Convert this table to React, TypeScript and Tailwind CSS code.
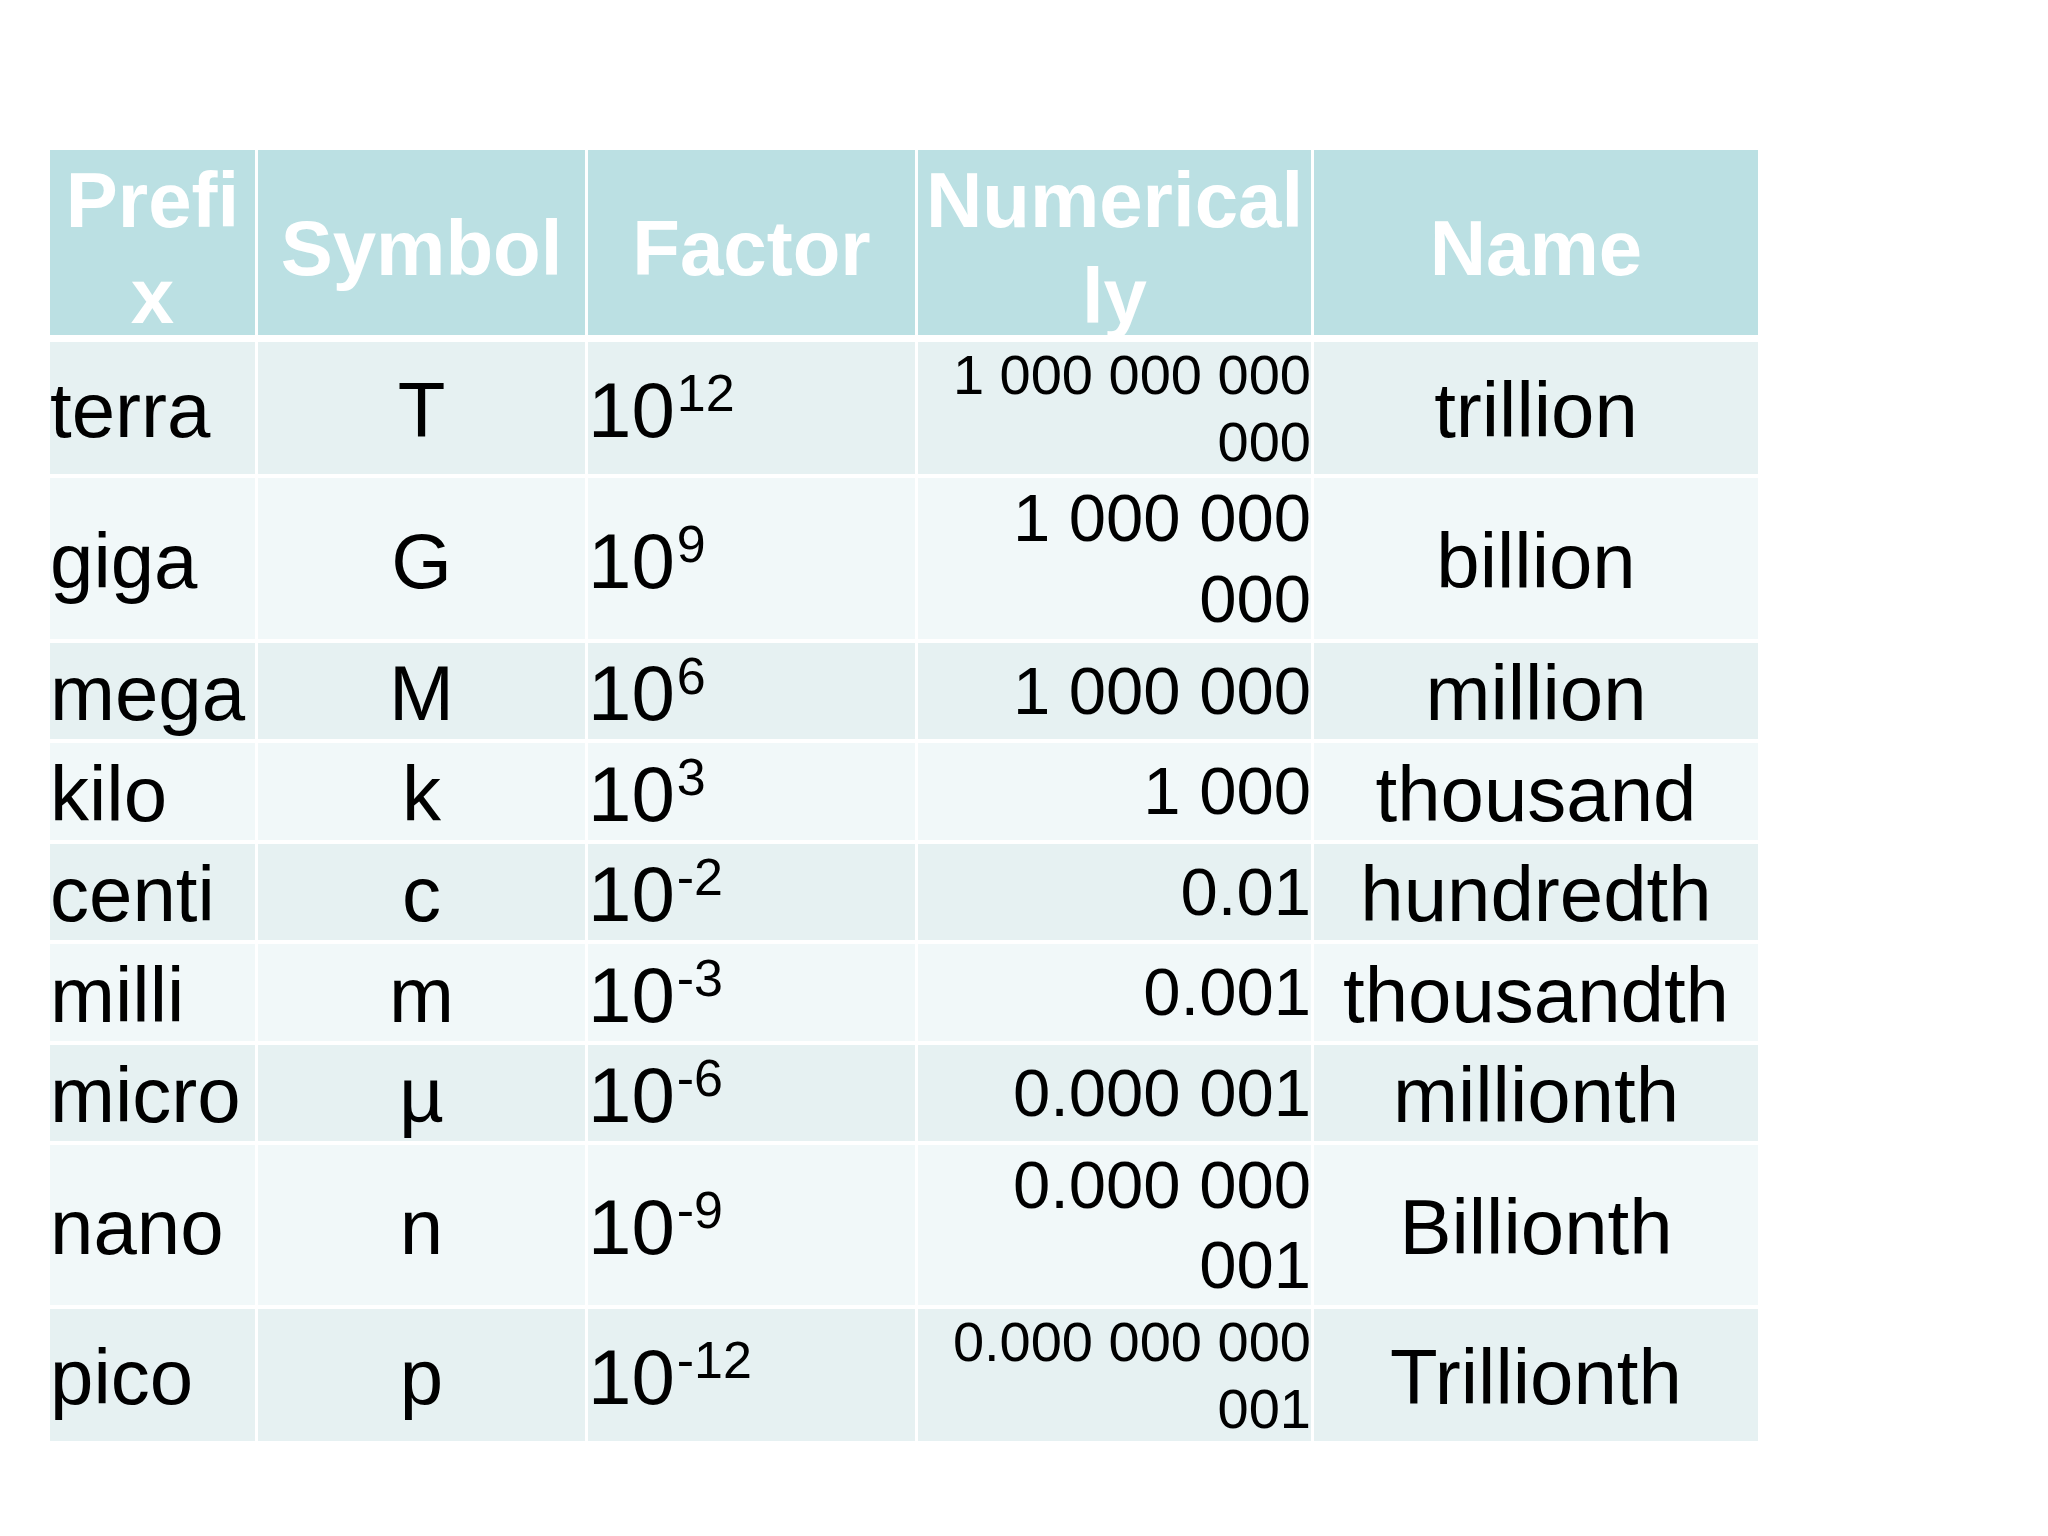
import React from "react";

// SI prefix table, drawn the way the slide shows it.

interface PrefixRow {
  prefix: string;
  symbol: string;
  exp: string;
  num: string;
  small?: boolean;
  name: string;
  height: string;
  bg: string;
}

const ODD = "bg-[#e6f1f2]";
const EVEN = "bg-[#f1f8f9]";

const rows: PrefixRow[] = [
  { prefix: "terra", symbol: "T", exp: "12", num: "1 000 000 000 000", small: true, name: "trillion", height: "h-[132px]", bg: ODD },
  { prefix: "giga", symbol: "G", exp: "9", num: "1 000 000 000", name: "billion", height: "h-[161px]", bg: EVEN },
  { prefix: "mega", symbol: "M", exp: "6", num: "1 000 000", name: "million", height: "h-[96px]", bg: ODD },
  { prefix: "kilo", symbol: "k", exp: "3", num: "1 000", name: "thousand", height: "h-[97px]", bg: EVEN },
  { prefix: "centi", symbol: "c", exp: "-2", num: "0.01", name: "hundredth", height: "h-[96px]", bg: ODD },
  { prefix: "milli", symbol: "m", exp: "-3", num: "0.001", name: "thousandth", height: "h-[97px]", bg: EVEN },
  { prefix: "micro", symbol: "µ", exp: "-6", num: "0.000 001", name: "millionth", height: "h-[96px]", bg: ODD },
  { prefix: "nano", symbol: "n", exp: "-9", num: "0.000 000 001", name: "Billionth", height: "h-[160px]", bg: EVEN },
  { prefix: "pico", symbol: "p", exp: "-12", num: "0.000 000 000 001", small: true, name: "Trillionth", height: "h-[132px]", bg: ODD },
];

// one fixed-height row per grid; content may overflow but never grows the row
const gridCols = "grid grid-rows-1 grid-cols-[205px_327px_327px_393px_444px] gap-x-[3px]";

function HeaderCell({ children }: { children: React.ReactNode }) {
  return (
    <div className="flex items-center justify-center bg-[#bbe0e3] pt-[10px] text-center text-[78px] font-bold leading-[96px] text-white">
      <div>{children}</div>
    </div>
  );
}

export default function App() {
  return (
    <div
      className="min-h-screen w-[2048px] bg-white pl-[50px] pt-[150px] text-black"
      style={{ fontFamily: '"Liberation Sans", Arial, sans-serif' }}
    >
      <div className="flex w-[1708px] flex-col gap-y-[4px]">
        <div className={`${gridCols} mb-[3px] h-[185px]`}>
          <HeaderCell>
            Prefi
            <br />x
          </HeaderCell>
          <HeaderCell>Symbol</HeaderCell>
          <HeaderCell>Factor</HeaderCell>
          <HeaderCell>
            Numerical
            <br />
            ly
          </HeaderCell>
          <HeaderCell>Name</HeaderCell>
        </div>

        {rows.map((r) => (
          <div key={r.prefix} className={`${gridCols} ${r.height}`}>
            <div className={`${r.bg} flex items-center pt-[6px] text-[78px] leading-[1.2]`}>
              {r.prefix}
            </div>
            <div className={`${r.bg} flex items-center justify-center pt-[6px] text-[78px] leading-[1.2]`}>
              {r.symbol}
            </div>
            <div className={`${r.bg} flex items-center pt-[6px] text-[78px] leading-[1.2]`}>
              <span>
                10
                <sup className="ml-[2px] text-[52px]">{r.exp}</sup>
              </span>
            </div>
            <div
              className={`${r.bg} flex items-center justify-end text-right leading-[1.2] ${
                r.small ? "text-[56px]" : "text-[67px]"
              }`}
            >
              <span>{r.num}</span>
            </div>
            <div className={`${r.bg} flex items-center justify-center pt-[6px] text-center text-[78px] leading-[1.2]`}>
              {r.name}
            </div>
          </div>
        ))}
      </div>
    </div>
  );
}
